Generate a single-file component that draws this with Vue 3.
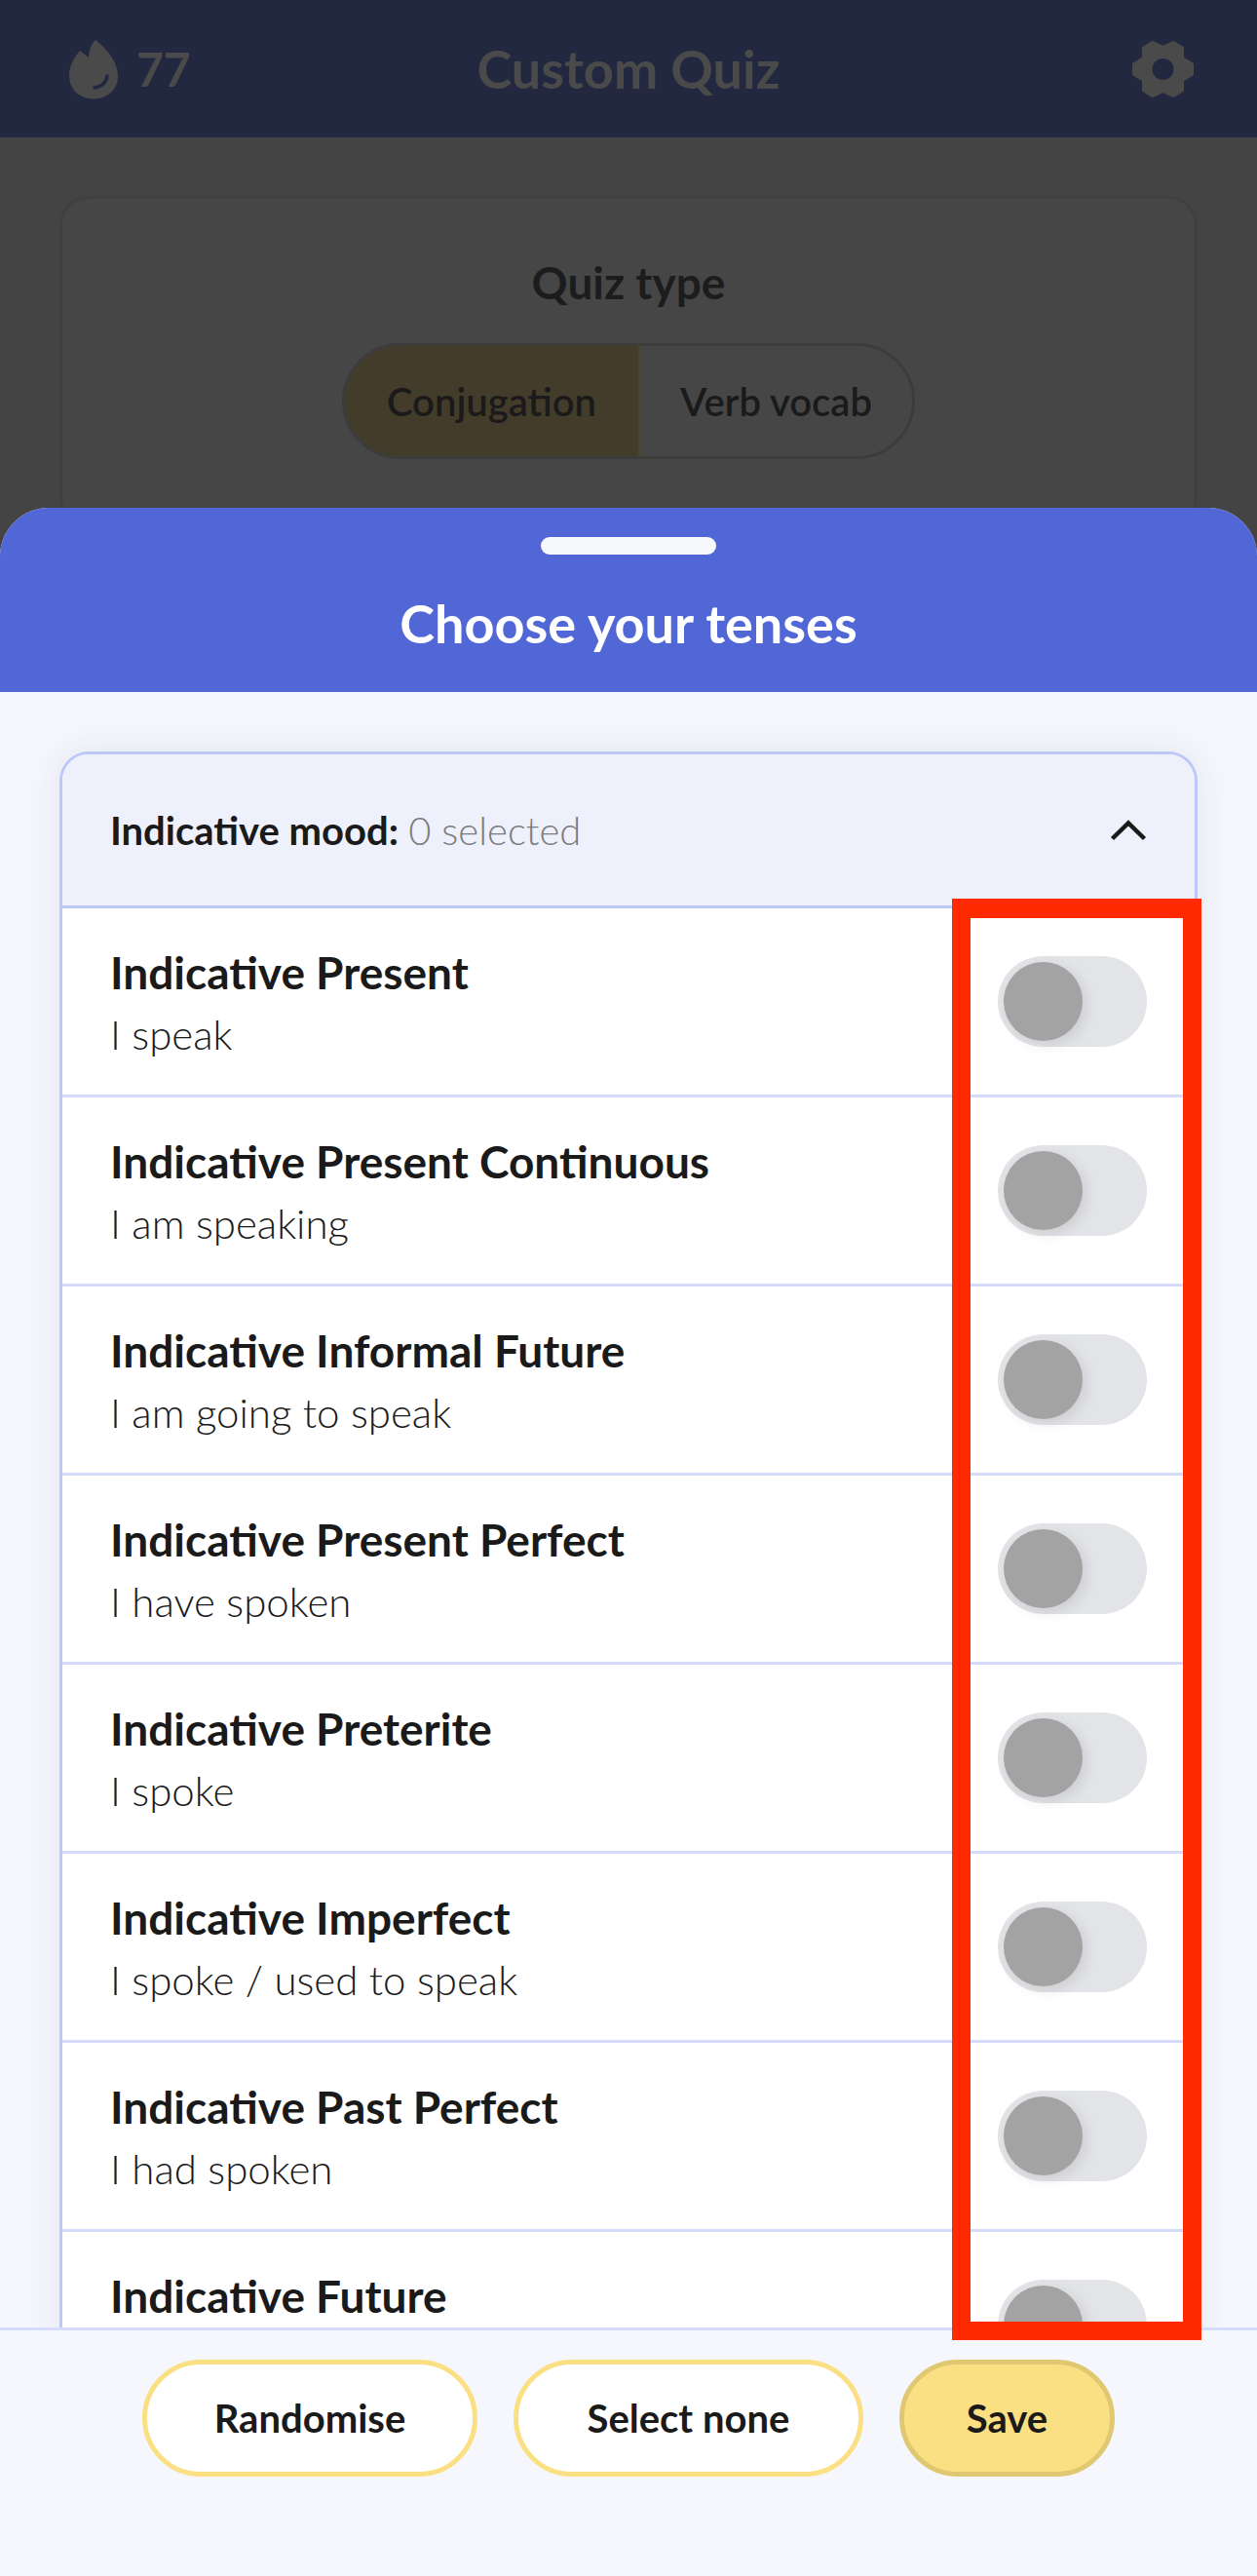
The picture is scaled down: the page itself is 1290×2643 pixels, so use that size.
<script setup>
const tenses = [
  { name: 'Indicative Present', example: 'I speak' },
  { name: 'Indicative Present Continuous', example: 'I am speaking' },
  { name: 'Indicative Informal Future', example: 'I am going to speak' },
  { name: 'Indicative Present Perfect', example: 'I have spoken' },
  { name: 'Indicative Preterite', example: 'I spoke' },
  { name: 'Indicative Imperfect', example: 'I spoke / used to speak' },
  { name: 'Indicative Past Perfect', example: 'I had spoken' },
  { name: 'Indicative Future', example: 'I will speak' },
]
</script>

<template>
  <div class="page">
    <header class="topbar">
      <div class="streak">
        <svg class="flame" viewBox="0 0 50 62" width="50" height="62">
          <path d="M27 1C36 8 50 22 50 38C50 52 39 61.500 25 61.500C11 61.500 0 52 0 37C0 27 6 18 11 12L20 19C20 12 23 5 27 1Z" fill="#4a4a4a" />
          <path d="M26 50C33 49 38 45 39 38" fill="none" stroke="#222840" stroke-width="3.500" stroke-linecap="round" />
        </svg>
        <span>77</span>
      </div>
      <div class="top-title">Custom Quiz</div>
      <svg class="gear" viewBox="0 0 64 60" width="64" height="60">
        <path d="M21 3L31.500 8L42 3L51 8.500V19L61 25V35L51 41V51.500L42 57L31.500 52L21 57L12 51.500V41L2 35V25L12 19V8.500Z" fill="#4a4a4a" stroke="#4a4a4a" stroke-width="4" stroke-linejoin="round" />
        <circle cx="31.500" cy="30" r="11" fill="#222840" />
      </svg>
    </header>

    <main class="behind">
      <section class="type-card">
        <h2>Quiz type</h2>
        <div class="segments">
          <div class="segment on">Conjugation</div>
          <div class="segment">Verb vocab</div>
        </div>
      </section>
    </main>

    <div class="sheet">
      <div class="sheet-head">
        <div class="grabber"></div>
        <div class="sheet-title">Choose your tenses</div>
      </div>
      <div class="sheet-body">
        <section class="mood">
          <div class="mood-head">
            <div><b>Indicative mood:</b> <span class="count">0 selected</span></div>
            <svg viewBox="0 0 38 22" width="38" height="22">
              <path d="M2.500 19.500L19 3.500L35.500 19.500" fill="none" stroke="#1a1a1a" stroke-width="4.500" />
            </svg>
          </div>
          <div v-for="t in tenses" :key="t.name" class="row">
            <div class="row-text">
              <div class="row-name">{{ t.name }}</div>
              <div class="row-example">{{ t.example }}</div>
            </div>
            <div class="toggle"><div class="knob"></div></div>
          </div>
        </section>
      </div>
      <footer class="sheet-foot">
        <button class="btn btn-randomise">Randomise</button>
        <button class="btn btn-none">Select none</button>
        <button class="btn save">Save</button>
      </footer>
    </div>

    <div class="highlight"></div>
  </div>
</template>

<style scoped>
.page {
  position: relative;
  width: 1290px;
  height: 2643px;
  overflow: hidden;
  background: #444444;
  font-family: Lato, "Noto Sans", sans-serif;
  color: #1a1a1a;
}
.topbar {
  height: 141px;
  box-sizing: border-box;
  background: #222840;
  color: #4a4a4a;
  display: flex;
  align-items: center;
  justify-content: space-between;
  padding: 0 64px 0 71px;
  position: relative;
}
.streak {
  display: flex;
  align-items: center;
  gap: 19px;
  font-size: 48px;
  font-weight: 700;
}
.top-title {
  position: absolute;
  left: 0;
  right: 0;
  text-align: center;
  font-size: 54px;
  font-weight: 700;
}
.behind {
  padding: 60px 61px 0;
}
.type-card {
  height: 340px;
  box-sizing: border-box;
  border: 3px solid #404040;
  border-radius: 30px;
  background: #464646;
  padding-top: 58px;
  text-align: center;
}
.type-card h2 {
  margin: 0;
  font-size: 46px;
  line-height: 56px;
  font-weight: 700;
  color: #1c1c1c;
}
.segments {
  display: inline-flex;
  margin-top: 34px;
  width: 588px;
  height: 119px;
  box-sizing: border-box;
  border: 3px solid #3c3c3c;
  border-radius: 60px;
  overflow: hidden;
}
.segment {
  flex: 1;
  display: flex;
  align-items: center;
  justify-content: center;
  font-size: 40px;
  font-weight: 600;
  background: #464646;
}
.segment.on {
  flex: 0 0 301px;
  background: #433c2a;
  border-right: 2px solid #4d442c;
}
.sheet {
  position: absolute;
  left: 0;
  right: 0;
  top: 521px;
  bottom: 0;
  display: flex;
  flex-direction: column;
  background: #f6f7fd;
  border-radius: 50px 50px 0 0;
  overflow: hidden;
}
.sheet-head {
  height: 189px;
  flex: none;
  background: #5167d6;
  text-align: center;
  padding-top: 30px;
  box-sizing: border-box;
}
.grabber {
  width: 180px;
  height: 18px;
  margin: 0 auto;
  border-radius: 9px;
  background: #f8f9fd;
}
.sheet-title {
  margin-top: 36px;
  font-size: 54px;
  line-height: 70px;
  font-weight: 700;
  color: #fff;
}
.sheet-body {
  flex: 1;
  min-height: 0;
  overflow: hidden;
  padding: 61px 61px 0;
}
.mood {
  border: 3px solid #bcc8f8;
  border-bottom: 0;
  border-radius: 30px 30px 0 0;
  background: #fff;
  box-shadow: 0 0 36px rgba(40, 50, 90, 0.09);
}
.mood-head {
  height: 158px;
  box-sizing: border-box;
  display: flex;
  align-items: center;
  justify-content: space-between;
  padding: 0 49px 0 49px;
  background: #eef0fc;
  border-bottom: 3px solid #bcc8f8;
  border-radius: 27px 27px 0 0;
  font-size: 40px;
}
.mood-head b {
  font-weight: 700;
}
.count {
  color: #7c7c7c;
  font-weight: 300;
}
.row {
  height: 194px;
  box-sizing: border-box;
  display: flex;
  align-items: center;
  justify-content: space-between;
  padding: 0 49px;
  border-bottom: 3px solid #d5dcfb;
}
.row-name {
  font-size: 46px;
  line-height: 60px;
  font-weight: 700;
}
.row-example {
  margin-top: 6px;
  font-size: 42px;
  line-height: 54px;
  font-weight: 300;
}
.toggle {
  width: 153px;
  height: 93px;
  box-sizing: border-box;
  padding: 6px;
  border-radius: 47px;
  background: #e3e4e8;
}
.knob {
  width: 81px;
  height: 81px;
  border-radius: 50%;
  background: #a3a3a3;
  box-shadow: 4px 4px 14px rgba(0, 0, 0, 0.1);
}
.sheet-foot {
  height: 255px;
  flex: none;
  box-sizing: border-box;
  border-top: 3px solid #d5dcfb;
  background: #f6f7fd;
  display: flex;
  justify-content: center;
  align-items: flex-start;
  gap: 37px;
  padding-top: 30px;
}
.btn {
  height: 120px;
  box-sizing: border-box;
  border: 5px solid #fbe083;
  border-radius: 60px;
  background: #fff;
  font-family: inherit;
  font-size: 40px;
  font-weight: 700;
  color: #1a1a1a;
  padding: 0;
}
.btn-randomise {
  width: 344px;
}
.btn-none {
  width: 359px;
}
.save {
  width: 221px;
  background: #fbe083;
  border-color: #e0c873;
}
.highlight {
  position: absolute;
  left: 977px;
  top: 922px;
  width: 256px;
  height: 1479px;
  box-sizing: border-box;
  border: solid #ff2a00;
  border-width: 20px 19px 19px 19px;
}
</style>
